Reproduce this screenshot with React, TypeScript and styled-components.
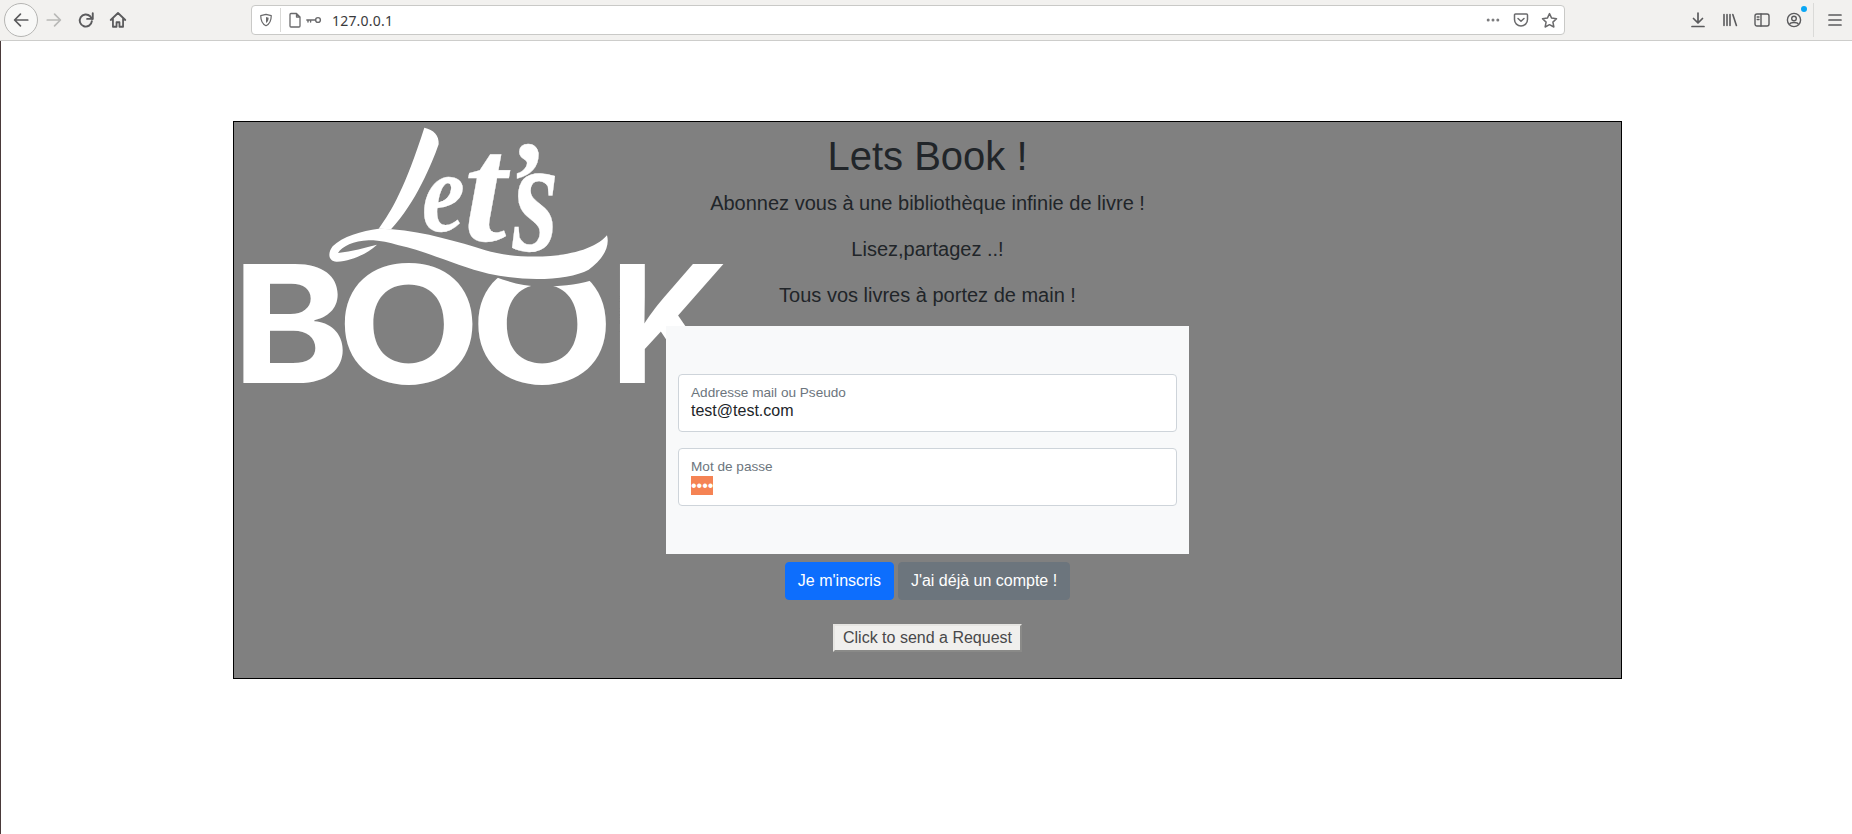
import React from "react";
import styled, { createGlobalStyle } from "styled-components";

const Global = createGlobalStyle`
  html, body { margin: 0; padding: 0; background: #fff; overflow: hidden; height: 100%; }
  body { font-family: "Liberation Sans", Arial, sans-serif; color: #212529; font-size: 16px; line-height: 1.5; }
  * { box-sizing: border-box; }
`;

const Toolbar = styled.header`
  height: 41px;
  display: flex;
  align-items: center;
  background: #f2f1ef;
  border-bottom: 1px solid #cdcdcb;
  padding-left: 4px;
  overflow: hidden;
`;
const BackCircle = styled.div`
  width: 34px;
  height: 34px;
  border-radius: 50%;
  border: 1px solid #b5b5b3;
  background: #f8f8f7;
  display: flex;
  align-items: center;
  justify-content: center;
`;
const Slot = styled.div<{ $w?: number }>`
  width: ${(p) => p.$w ?? 32}px;
  height: 28px;
  flex: none;
  display: flex;
  align-items: center;
  justify-content: center;
  position: relative;
`;
const UrlBar = styled.div`
  margin-left: 117px;
  width: 1314px;
  height: 30px;
  background: #fff;
  border: 1px solid #c9c9c7;
  border-radius: 4px;
  display: flex;
  align-items: center;
  padding-left: 6px;
  padding-right: 1px;
`;
const Sep = styled.div`
  width: 1px;
  height: 24px;
  background: #d9d9d7;
  margin-right: 3px;
`;
const UrlText = styled.span`
  font-family: "Noto Sans", "Open Sans", sans-serif;
  font-size: 14px;
  color: #3a3a3c;
  margin-left: 9px;
  letter-spacing: 0.2px;
  flex: 1;
`;
const RightGroup = styled.div`
  margin-left: auto;
  display: flex;
  align-items: center;
  padding-right: 1px;
`;
const ToolSep = styled.div`
  width: 1px;
  height: 34px;
  background: #dadad8;
  margin: 0 5px 0 3px;
`;
const BlueDot = styled.span`
  position: absolute;
  right: 3px;
  top: 0;
  width: 6px;
  height: 6px;
  border-radius: 50%;
  background: #0aa7f5;
`;

const Content = styled.main`
  border-left: 1px solid #4a3a3a;
  height: 793px;
  padding: 80px 0 0 232px;
`;
const Panel = styled.section`
  position: relative;
  width: 1389px;
  height: 558px;
  background: #808080;
  border: 1px solid #000;
  padding-top: 10px;
  text-align: center;
`;
const LogoMark = styled.svg`
  position: absolute;
  left: 8px;
  top: 5px;
  width: 482.33px;
  height: 257.33px;
  overflow: visible;
`;
const Title = styled.h1`
  position: relative;
  margin: 0 0 8px;
  font-size: 40px;
  line-height: 48px;
  font-weight: 400;
`;
const Lead = styled.p`
  position: relative;
  margin: 0 0 16px;
  font-size: 20px;
  line-height: 30px;
`;
const FormCard = styled.form`
  position: relative;
  width: 523px;
  margin: 0 auto;
  background: #f8f9fa;
  padding: 48px 12px;
  text-align: left;
  display: flex;
  flex-direction: column;
  gap: 16px;
`;
const Field = styled.div`
  height: 58px;
  background: #fff;
  border: 1px solid #ced4da;
  border-radius: 4px;
  padding: 9px 12px 0;
`;
const FieldLabel = styled.div`
  font-size: 13.6px;
  line-height: 17px;
  color: #6c757d;
`;
const FieldValue = styled.div`
  font-size: 16px;
  line-height: 20px;
  color: #212529;
`;
const MaskedValue = styled.span`
  display: block;
  height: 19px;
  width: 22px;
  background: #f58354;
  color: #fff;
  font-size: 16px;
  line-height: 19px;
  white-space: nowrap;
  overflow: hidden;
  margin-top: 1px;
`;
const Actions = styled.div`
  position: relative;
  display: flex;
  justify-content: center;
  gap: 4px;
  margin-top: 8px;
`;
const ActionButton = styled.button<{ $tone: "primary" | "secondary" }>`
  height: 38px;
  padding: 0 12px;
  border: 1px solid ${(p) => (p.$tone === "primary" ? "#0d6efd" : "#6c757d")};
  background: ${(p) => (p.$tone === "primary" ? "#0d6efd" : "#6c757d")};
  border-radius: 4px;
  color: #fff;
  font: 16px/24px "Liberation Sans", Arial, sans-serif;
`;
const RequestRow = styled.div`
  position: relative;
  display: flex;
  justify-content: center;
  margin-top: 24px;
`;
const RequestButton = styled.button`
  height: 28px;
  padding: 0 8px;
  background: #f0efed;
  border: 2px solid;
  border-color: #e6e5e2 #8a8a88 #8a8a88 #e6e5e2;
  color: #48484a;
  font: 16px/22px "Liberation Sans", Arial, sans-serif;
`;

const Ico: React.FC<{ size?: number; color?: string; sw?: number; children: React.ReactNode }> = ({ size = 16, color = "#5b5b5d", sw = 1.6, children }) => (
  <svg width={size} height={size} viewBox="0 0 16 16" fill="none" stroke={color} strokeWidth={sw} strokeLinecap="round" strokeLinejoin="round">
    {children}
  </svg>
);

function Logo() {
  const block = { fill: "#fff", fontFamily: "Inter, 'Liberation Sans', sans-serif", fontWeight: 700, fontSize: 490, textAnchor: "middle" } as const;
  const script = { fill: "#fff", stroke: "#fff", fontFamily: "'Liberation Serif', serif", fontStyle: "italic", fontWeight: 700 } as const;
  return (
    <LogoMark viewBox="50 50 1447 772">
      <text transform="translate(196 818) scale(1.09 1)" style={block}>B</text>
      <text transform="translate(550 818) scale(1.15 1)" style={block}>O</text>
      <text transform="translate(950 818) scale(1.15 1)" style={block}>O</text>
      <text transform="translate(1331 818) scale(1.02 1)" style={block}>K</text>
      <path d="M760,478 C830,510 890,530 950,528 C1000,528 1050,525 1095,511 L1110,450 L760,450 Z" fill="#808080" />
      <path d="M460,355 C500,300 540,230 597,52 C625,58 642,75 640,102 C620,160 570,280 497,357 Z" fill="#fff" />
      <text transform="translate(590 362) scale(.85 1)" style={{ ...script, fontSize: 340 }}>e</text>
      <text transform="translate(715 388)" style={{ ...script, fontSize: 460 }}>t</text>
      <text transform="translate(838 328)" style={{ ...script, fontSize: 340 }}>’</text>
      <text transform="translate(862 418) scale(.72 1)" style={{ ...script, fontSize: 490 }}>s</text>
      <path
        fill="#fff"
        d="M460,355 L500,357 C600,365 700,395 780,420 C880,450 1080,450 1145,375 C1155,410 1130,450 1090,478 C1030,510 900,515 790,490 C700,470 600,420 520,405 C490,397 470,390 430,390 C385,392 350,408 338,428 C380,423 420,412 455,403 C425,430 380,452 335,454 C310,455 305,430 322,408 C350,378 410,362 460,355 Z"
      />
    </LogoMark>
  );
}

export default function App() {
  return (
    <>
      <Global />
      <Toolbar>
        <BackCircle>
          <Ico size={18} sw={1.5}><path d="M14 8H2.500M7.500 2.800 2.300 8l5.200 5.200" /></Ico>
        </BackCircle>
        <Slot><Ico size={18} color="#b9b9b7" sw={1.5}><path d="M2 8h11.500M8.500 2.800 13.700 8l-5.200 5.200" /></Ico></Slot>
        <Slot><Ico size={18} sw={1.7}><path d="M13.200 9a5.400 5.400 0 1 1-1.500-4.300L13.500 7" /><path d="M14 2v5H9" /></Ico></Slot>
        <Slot><Ico size={18} sw={1.6}><path d="M1.500 8 8 1.800 14.500 8M3.500 6.500V14h3.200v-4h2.600v4h3.200V6.500" /></Ico></Slot>
        <UrlBar>
          <Slot $w={16}><Ico size={14} color="#6a6a6c" sw={1.4}><path d="M8 1.500 14 3c0 5-1 9-6 11.500C3 12 2 8 2 3Z" /><path d="M8 4.500 11 5.300c0 2.500-.7 4.400-3 6Z" fill="#6a6a6c" stroke="none" /></Ico></Slot>
          <Slot $w={6} />
          <Sep />
          <Slot $w={21}><Ico size={16} color="#6a6a6c" sw={1.3}><path d="M3 2.500A1 1 0 0 1 4 1.500h5.500L13 5v9a1 1 0 0 1-1 1H4a1 1 0 0 1-1-1ZM9.500 1.500V5H13" /></Ico></Slot>
          <Slot $w={18}><Ico size={16} color="#6a6a6c" sw={1.4}><circle cx="12" cy="8" r="2.400" /><path d="M9.500 8H.8M2 8v2M4.600 8v2" /></Ico></Slot>
          <UrlText>127.0.0.1</UrlText>
          <Slot $w={28}><Ico size={16} color="#7b7b7d" sw={0}><circle cx="3.200" cy="8" r="1.500" fill="#7b7b7d" /><circle cx="8" cy="8" r="1.500" fill="#7b7b7d" /><circle cx="12.800" cy="8" r="1.500" fill="#7b7b7d" /></Ico></Slot>
          <Slot $w={28}><Ico size={16} color="#6a6a6c" sw={1.500}><path d="M2.500 2h11A1 1 0 0 1 14.500 3v4.500a6.500 6.500 0 0 1-13 0V3a1 1 0 0 1 1-1Z" /><path d="m5 6.500 3 2.800 3-2.800" /></Ico></Slot>
          <Slot $w={28}><Ico size={17} color="#6a6a6c" sw={1.4}><path d="M8 1.500 10 5.700l4.600.6-3.400 3.200.9 4.600L8 11.900l-4.100 2.200.9-4.600-3.400-3.200 4.600-.6Z" /></Ico></Slot>
        </UrlBar>
        <RightGroup>
          <Slot><Ico size={16} sw={1.7}><path d="M8 1v9.500M3.500 6.500 8 11l4.500-4.500M2 14.500h12" /></Ico></Slot>
          <Slot><Ico size={16} sw={1.6}><path d="M2 2.500v11M5 2.500v11M8 2.500v11M10.800 2.500l3.600 11" /></Ico></Slot>
          <Slot><Ico size={16} sw={1.4}><rect x="1" y="2" width="14" height="12" rx="2" /><path d="M7 2v12M3.200 5h1.800M3.200 7.500h1.800" /></Ico></Slot>
          <Slot><Ico size={16} sw={1.4}><circle cx="8" cy="8" r="6.600" /><circle cx="8" cy="6.500" r="2.300" /><path d="M3.800 12c1-2 7.400-2 8.400 0" /></Ico><BlueDot /></Slot>
          <ToolSep />
          <Slot><Ico size={16} sw={1.7}><path d="M2 3h12M2 8h12M2 13h12" /></Ico></Slot>
        </RightGroup>
      </Toolbar>
      <Content>
        <Panel>
          <Logo />
          <Title>Lets Book !</Title>
          <Lead>Abonnez vous à une bibliothèque infinie de livre !</Lead>
          <Lead>Lisez,partagez ..!</Lead>
          <Lead>Tous vos livres à portez de main !</Lead>
          <FormCard>
            <Field>
              <FieldLabel>Addresse mail ou Pseudo</FieldLabel>
              <FieldValue>test@test.com</FieldValue>
            </Field>
            <Field>
              <FieldLabel>Mot de passe</FieldLabel>
              <FieldValue><MaskedValue>••••</MaskedValue></FieldValue>
            </Field>
          </FormCard>
          <Actions>
            <ActionButton type="button" $tone="primary">Je m'inscris</ActionButton>
            <ActionButton type="button" $tone="secondary">J'ai déjà un compte !</ActionButton>
          </Actions>
          <RequestRow>
            <RequestButton type="button">Click to send a Request</RequestButton>
          </RequestRow>
        </Panel>
      </Content>
    </>
  );
}
